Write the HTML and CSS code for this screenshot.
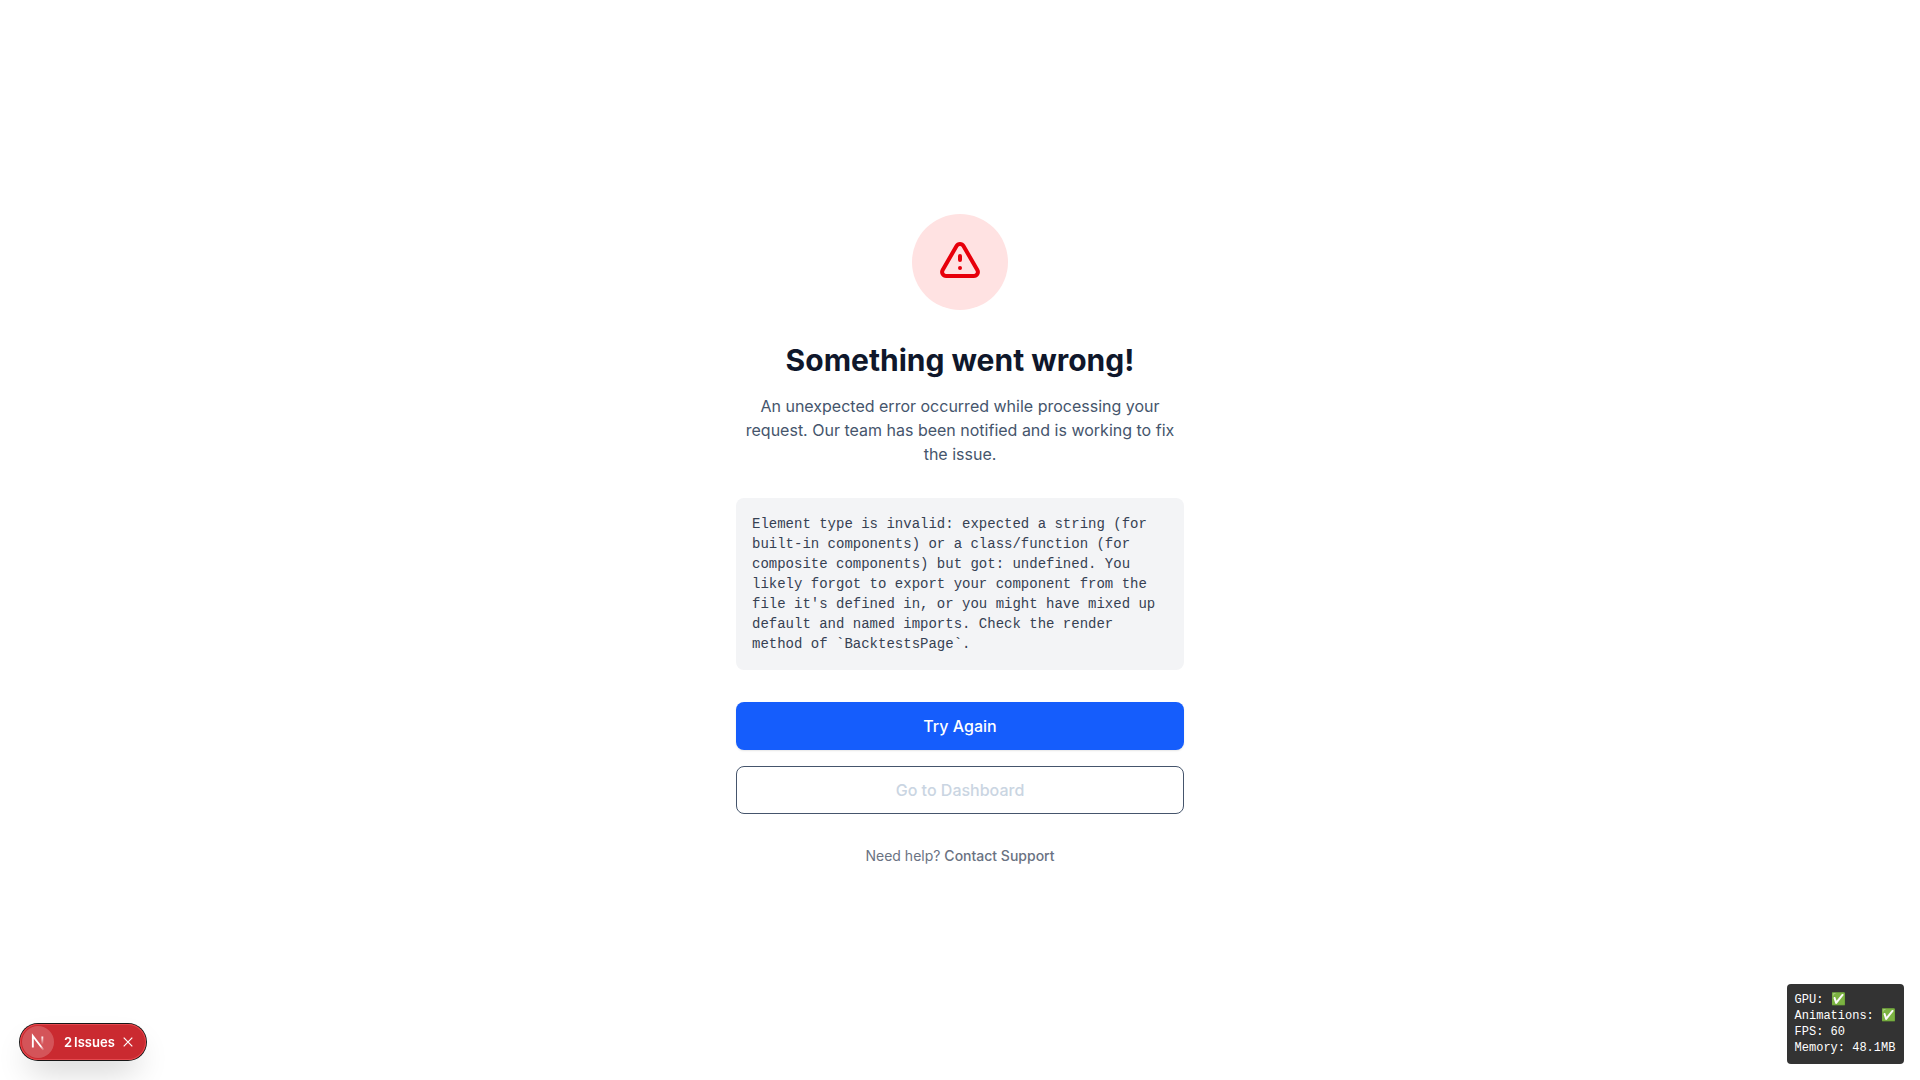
FILE: index.html
```html
<!DOCTYPE html>
<html lang="en">
<head>
  <meta charset="utf-8">
  <meta name="viewport" content="width=device-width, initial-scale=1">
  <title>Something went wrong!</title>
  <link rel="stylesheet" href="styles.css">
</head>
<body>
  <main class="error-page">
    <section class="error-content">
      <div class="error-icon">
        <svg width="48" height="48" viewBox="0 0 24 24" fill="none" stroke="currentColor" stroke-width="2" stroke-linecap="round" stroke-linejoin="round" aria-hidden="true">
          <path d="M12 9v2m0 4h.01m-6.938 4h13.856c1.54 0 2.502-1.667 1.732-3L13.732 4c-.77-1.333-2.694-1.333-3.464 0L3.34 16c-.77 1.333.192 3 1.732 3z"/>
        </svg>
      </div>
      <h1 class="error-title">Something went wrong!</h1>
      <p class="error-text">An unexpected error occurred while processing your request. Our team has been notified and is working to fix the issue.</p>
      <p class="error-detail">Element type is invalid: expected a string (for built-in components) or a class/function (for composite components) but got: undefined. You likely forgot to export your component from the file it's defined in, or you might have mixed up default and named imports. Check the render method of `BacktestsPage`.</p>
      <div class="actions">
        <button type="button" class="button button-primary">Try Again</button>
        <button type="button" class="button button-outline">Go to Dashboard</button>
      </div>
      <p class="help">Need help? <a class="help-link" href="#support">Contact Support</a></p>
    </section>
  </main>

  <aside class="dev-indicator">
    <button type="button" class="dev-logo" aria-label="Open developer tools">
      <svg width="32" height="32" viewBox="0 0 32 32" fill="none" aria-hidden="true">
        <defs>
          <linearGradient id="fade-diagonal" gradientUnits="userSpaceOnUse" x1="10" y1="11.1" x2="15.5" y2="18">
            <stop stop-color="#fff"/>
            <stop offset="0.6" stop-color="#fff" stop-opacity="0"/>
          </linearGradient>
          <linearGradient id="fade-stem" gradientUnits="userSpaceOnUse" x1="11.8" y1="1.4" x2="11.8" y2="9.6">
            <stop stop-color="#fff"/>
            <stop offset="1" stop-color="#fff" stop-opacity="0"/>
          </linearGradient>
        </defs>
        <g transform="translate(8.5 9)" stroke-width="1.86">
          <path d="M13.3 15.2 2.34 1v11.6" stroke="url(#fade-diagonal)"/>
          <path d="M11.825 1.5v11.6" stroke="url(#fade-stem)"/>
        </g>
      </svg>
    </button>
    <button type="button" class="dev-issues"><span>2</span><span>Issues</span></button>
    <button type="button" class="dev-close" aria-label="Dismiss">
      <svg width="10" height="10" viewBox="0 0 10 10" fill="none" stroke="currentColor" stroke-width="1.2" aria-hidden="true">
        <path d="M.7.7l8.6 8.6M9.3.7L.7 9.3"/>
      </svg>
    </button>
  </aside>

  <aside class="perf-monitor">
    <div>GPU: ✅</div>
    <div>Animations: ✅</div>
    <div>FPS: 60</div>
    <div>Memory: 48.1MB</div>
  </aside>
</body>
</html>
```

FILE: styles.css
```css
*,
*::before,
*::after {
  box-sizing: border-box;
}

body {
  margin: 0;
  background: #fff;
  color: #0f172b;
  font-family: Inter, sans-serif;
  font-size: 16px;
  line-height: 24px;
}

h1,
p {
  margin: 0;
}

button {
  padding: 0;
  border: 0;
  background: none;
  color: inherit;
  font: inherit;
  cursor: pointer;
}

svg {
  display: block;
}

.error-page {
  display: flex;
  align-items: center;
  justify-content: center;
  min-height: 100vh;
  padding: 16px;
}

.error-content {
  display: flex;
  flex-direction: column;
  width: 100%;
  max-width: 448px;
  text-align: center;
}

.error-icon {
  display: flex;
  align-items: center;
  justify-content: center;
  align-self: center;
  width: 96px;
  height: 96px;
  margin-bottom: 32px;
  border-radius: 50%;
  background: #ffe2e2;
  color: #e7000b;
}

.error-title {
  margin-bottom: 16px;
  font-size: 30px;
  font-weight: 700;
  line-height: 36px;
}

.error-text {
  margin-bottom: 32px;
  color: #45556c;
}

.error-detail {
  margin-bottom: 32px;
  padding: 16px;
  border-radius: 8px;
  background: #f3f4f6;
  color: #364153;
  font-family: "Liberation Mono", monospace;
  font-size: 14px;
  line-height: 20px;
  text-align: left;
  overflow-wrap: break-word;
}

.actions {
  display: flex;
  flex-direction: column;
  gap: 16px;
}

.button {
  height: 48px;
  border-radius: 8px;
  font-weight: 500;
}

.button-primary {
  background: #155dfc;
  box-shadow: 0 1px 2px rgba(0, 0, 0, 0.1);
  color: #fff;
}

.button-outline {
  border: 1px solid #45556c;
  color: #cad5e2;
}

.help {
  margin-top: 32px;
  color: #6a7282;
  font-size: 14px;
  line-height: 20px;
}

.help-link {
  color: inherit;
  font-weight: 500;
  text-decoration: none;
}

.dev-indicator {
  position: fixed;
  bottom: 20px;
  left: 20px;
  display: flex;
  align-items: center;
  height: 36px;
  padding: 2px;
  border-radius: 18px;
  background: #ca2a30;
  box-shadow:
    0 0 0 1px #171717,
    inset 0 0 0 1px #e5484d,
    0 16px 32px -8px rgba(0, 0, 0, 0.24);
  color: #fff;
  font-size: 13px;
  line-height: 16px;
}

.dev-logo {
  width: 32px;
  height: 32px;
  border-radius: 50%;
  background: rgba(255, 255, 255, 0.2);
}

.dev-issues {
  display: flex;
  gap: 2px;
  margin-left: 10px;
  font-weight: 600;
}

.dev-close {
  padding: 6px;
  margin: 0 5px 0 2px;
}

.perf-monitor {
  position: fixed;
  right: 16px;
  bottom: 16px;
  padding: 8px;
  border-radius: 4px;
  background: #333;
  color: #fff;
  font-family: "Liberation Mono", monospace;
  font-size: 12px;
  line-height: 16px;
}
```
